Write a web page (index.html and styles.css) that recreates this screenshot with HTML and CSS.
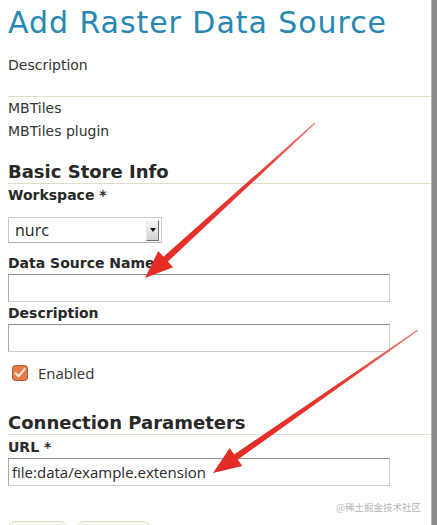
FILE: index.html
```html
<!DOCTYPE html>
<html lang="en">
<head>
<meta charset="utf-8">
<title>Add Raster Data Source</title>
<link rel="stylesheet" href="styles.css">
</head>
<body>
<div class="screen">
  <main class="page">
    <h1 class="title">Add Raster Data Source</h1>
    <div class="intro">
      <p class="desc">Description</p>
    </div>
    <div class="store-type">
      <p>MBTiles</p>
      <p>MBTiles plugin</p>
    </div>

    <h2 class="section-head">Basic Store Info</h2>
    <label class="label label-first">Workspace *</label>
    <div class="select">
      <span class="select-value">nurc</span>
      <span class="select-btn"><span class="select-tri"></span></span>
    </div>

    <label class="label label-after-select">Data Source Name *</label>
    <div class="input"></div>

    <label class="label">Description</label>
    <div class="input"></div>

    <div class="check-row">
      <svg class="checkbox" width="16" height="16" viewBox="0 0 16 16">
        <rect x="0.5" y="0.5" width="15" height="15" rx="3" fill="#e07d4a" stroke="#b85b2c"/>
        <path d="M3.6 8.2 L6.6 11.2 L12.6 4.2" fill="none" stroke="#fbe6d6" stroke-width="2.2" stroke-linecap="round" stroke-linejoin="round"/>
      </svg>
      <span class="check-label">Enabled</span>
    </div>

    <h2 class="section-head section-head-2">Connection Parameters</h2>
    <label class="label label-url">URL *</label>
    <div class="input"><span class="input-value">file:data/example.extension</span></div>

    <div class="watermark">@稀土掘金技术社区</div>

    <div class="buttons">
      <div class="btn btn-save"></div>
      <div class="btn btn-cancel"></div>
    </div>
  </main>
  <div class="edge"></div>
</div>

<svg class="arrows" width="437" height="525" viewBox="0 0 437 525">
  <defs>
    <linearGradient id="redA" x1="315" y1="123" x2="145" y2="278" gradientUnits="userSpaceOnUse">
      <stop offset="0" stop-color="#f07a70"/>
      <stop offset="0.35" stop-color="#e8382f"/>
      <stop offset="1" stop-color="#e42a24"/>
    </linearGradient>
    <linearGradient id="redB" x1="418" y1="330" x2="213" y2="473" gradientUnits="userSpaceOnUse">
      <stop offset="0" stop-color="#f07a70"/>
      <stop offset="0.35" stop-color="#e8382f"/>
      <stop offset="1" stop-color="#e42a24"/>
    </linearGradient>
  </defs>
  <polygon fill="url(#redA)" points="314.6,122.6 163.5,256.7 158.3,251.0 145,278 173.1,267.2 167.9,261.5 315.4,123.4"/>
  <polygon fill="url(#redB)" points="417.7,329.5 234.2,454.4 229.7,448.0 213,473 242.3,466.0 237.8,459.6 418.3,330.5"/>
</svg>
</body>
</html>
```

FILE: styles.css
```css
html, body {
  margin: 0;
  padding: 0;
  overflow: hidden;
  background: #ffffff;
}

body {
  width: 437px;
  height: 525px;
  position: relative;
  font-family: "DejaVu Sans", Verdana, sans-serif;
  color: #333333;
}

.screen {
  display: flex;
  align-items: stretch;
  width: 437px;
  height: 525px;
}

.page {
  width: 424px;
  padding-left: 8px;
  display: flex;
  flex-direction: column;
}

.page > * {
  flex-shrink: 0;
}

.edge {
  width: 5px;
  background: #8b8b8b;
  border-left: 1px solid #b5b5b5;
}

p {
  margin: 0;
}

.title {
  margin: 0;
  padding-top: 5px;
  font-size: 30px;
  line-height: 36px;
  font-weight: normal;
  letter-spacing: 0.95px;
  color: #2787b3;
}

.intro {
  margin-top: 15px;
  padding-bottom: 22px;
  border-bottom: 1px solid #dde0c8;
}

.desc {
  font-size: 14px;
  line-height: 18px;
}

.store-type {
  font-size: 14px;
  line-height: 23px;
}

.section-head {
  margin: 18px 0 0 0;
  padding-bottom: 0;
  font-size: 18px;
  line-height: 22px;
  font-weight: bold;
  color: #282828;
  border-bottom: 1px solid #dde0c8;
}

.section-head-2 {
  margin-top: 30px;
}

.label {
  display: block;
  margin-top: 2px;
  font-size: 14px;
  line-height: 18px;
  font-weight: bold;
  color: #282828;
}

.label-after-select {
  margin-top: 11px;
}

.label-url {
  margin-top: 3px;
}

.select {
  margin-top: 13px;
  width: 154px;
  height: 26px;
  box-sizing: border-box;
  border: 1px solid #c9c9c9;
  border-bottom-color: #b0b0b0;
  display: flex;
  align-items: center;
  padding: 0 2px 0 6px;
  background: #ffffff;
}

.select-value {
  flex: 1;
  font-family: "Open Sans", sans-serif;
  font-size: 16px;
  color: #222222;
}

.select-btn {
  width: 13px;
  height: 21px;
  box-sizing: border-box;
  background: linear-gradient(#f7f7f7, #d2d2d2);
  border: 1px solid;
  border-color: #ffffff #6f6f6f #6f6f6f #e8e8e8;
  display: flex;
  align-items: center;
  justify-content: center;
}

.select-tri {
  width: 0;
  height: 0;
  border-left: 3px solid transparent;
  border-right: 3px solid transparent;
  border-top: 4px solid #111111;
}

.input {
  margin-top: 2px;
  width: 382px;
  height: 28px;
  box-sizing: border-box;
  border: 1px solid #cfcfcf;
  border-top-color: #8e8e8e;
  border-left-color: #a8a8a8;
  display: flex;
  align-items: center;
  padding-left: 3px;
  background: #ffffff;
}

.input-value {
  font-family: "Open Sans", sans-serif;
  font-size: 15px;
  color: #2a2a2a;
}

.check-row {
  margin-top: 12px;
  height: 18px;
  display: flex;
  align-items: center;
  gap: 10px;
  padding-left: 4px;
}

.checkbox {
  display: block;
}

.check-label {
  font-family: "Open Sans", sans-serif;
  font-size: 15px;
  line-height: 18px;
  color: #333333;
}

.watermark {
  margin-top: 14px;
  padding-right: 10px;
  text-align: right;
  font-family: "Noto Sans CJK SC", sans-serif;
  font-size: 9.5px;
  line-height: 14px;
  color: #b4b4b4;
}

.buttons {
  margin-top: 7px;
  display: flex;
  gap: 10px;
}

.btn {
  height: 22px;
  border: 1px solid #d3dcb8;
  border-radius: 7px 7px 0 0;
  background: #fbfcf5;
}

.btn-save {
  width: 57px;
}

.btn-cancel {
  width: 71px;
}

.arrows {
  position: absolute;
  left: 0;
  top: 0;
  pointer-events: none;
}
```
